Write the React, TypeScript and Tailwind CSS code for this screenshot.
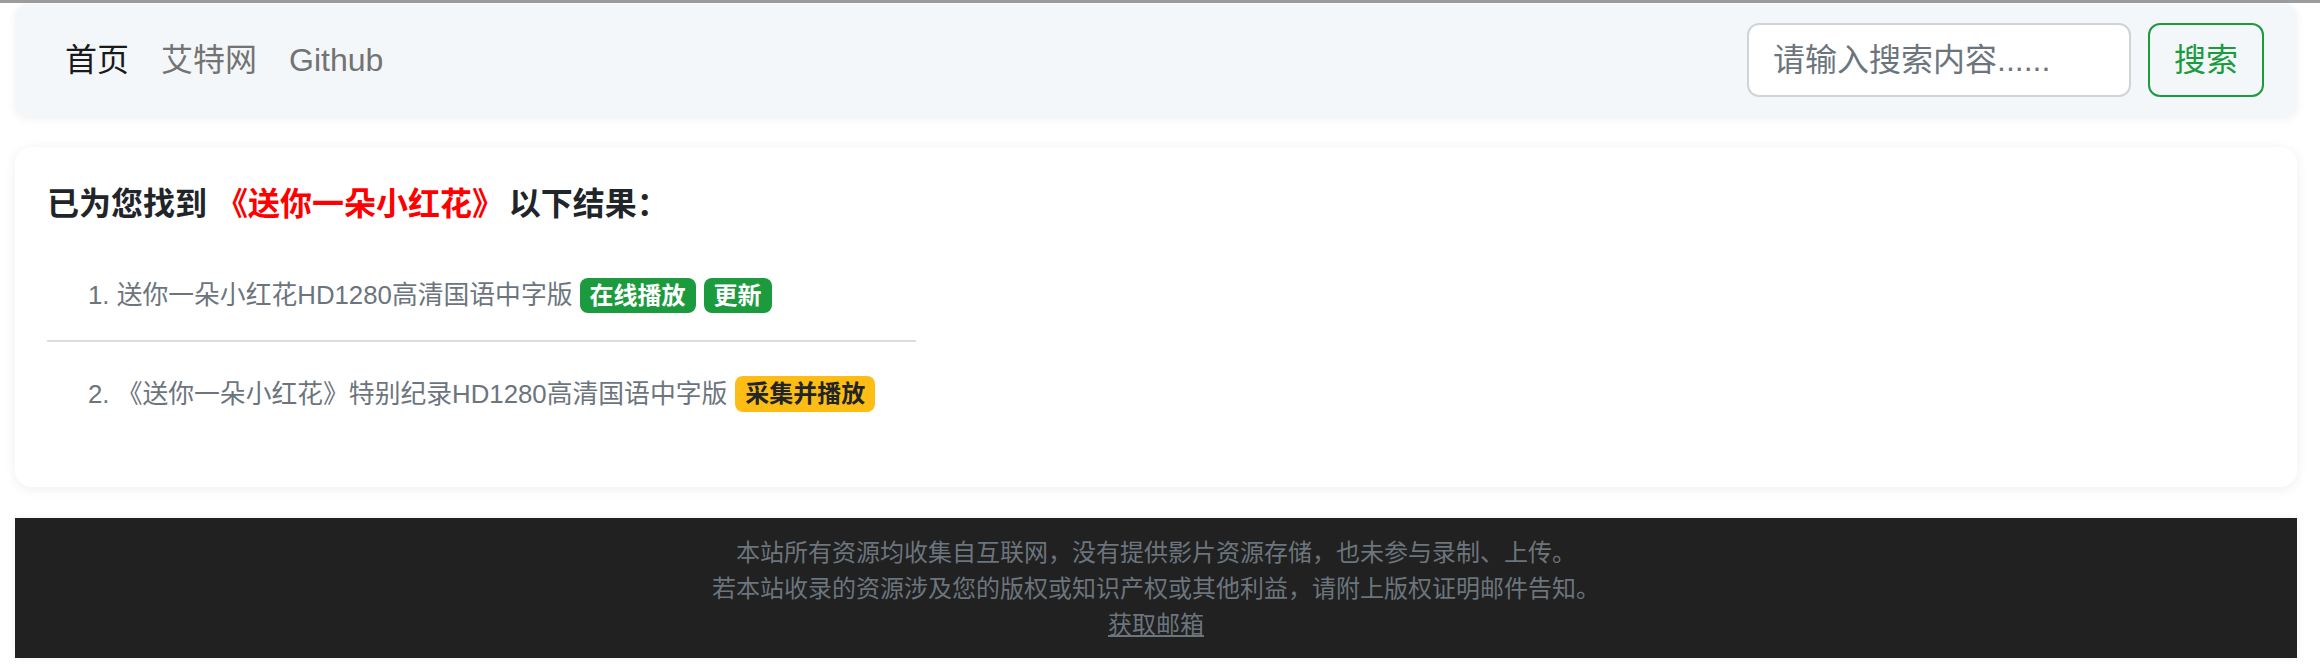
import React from "react";

const font = { fontFamily: '"Liberation Sans", "Noto Sans CJK SC", sans-serif' };

export default function App() {
  return (
    <div className="min-h-[670px] bg-white" style={font}>
      <div className="h-[3px] bg-[#9c9c9c]" />
      <div className="pl-[15px] pr-[23px] pt-px">
        <nav className="flex h-[112px] items-center justify-between rounded-[12px] bg-[#f4f7fa] pl-[34px] pr-[33px] shadow-[0_3px_10px_rgba(0,0,0,0.06)]">
          <div className="flex items-center text-[32px] leading-[48px]">
            <a className="px-4 text-[#1a1a1a]">首页</a>
            <a className="px-4 text-[#737373]">艾特网</a>
            <a className="px-4 text-[#737373]">Github</a>
          </div>
          <div className="flex items-center gap-[17px]">
            <input
              className="h-[74px] w-[384px] rounded-[12px] border-2 border-[#cfd4da] bg-white px-[24px] text-[32px] text-[#212529] outline-none placeholder:text-[#6c757d]"
              placeholder="请输入搜索内容......"
              style={font}
            />
            <button className="h-[74px] w-[116px] rounded-[12px] border-2 border-[#1b9b3e] text-[32px] text-[#1b9b3e]">
              搜索
            </button>
          </div>
        </nav>

        <div className="mt-[31px] rounded-[16px] bg-white pb-[75px] pl-[32px] pt-[38px] shadow-[0_2px_12px_rgba(0,0,0,0.07)]">
          <h5 className="text-[32px] font-bold leading-[38px] text-[#212529]">
            已为您找到 <span className="mr-[-4px] text-[#ff0000]">《送你一朵小红花》</span> 以下结果：
          </h5>
          <div className="mt-[55px] w-[869px]">
            <div className="border-b-2 border-[#dcdcdc] pb-[27px]">
              <div className="flex h-[35px] items-center pl-[41px] text-[25.8px] leading-[35px] text-[#6c757d]">
                <span>1. 送你一朵小红花HD1280高清国语中字版</span>
                <span className="ml-[7px] flex h-[35px] items-center rounded-[8px] bg-[#1b9b3e] px-[10px] text-[24px] font-bold text-white">
                  在线播放
                </span>
                <span className="ml-[8px] flex h-[35px] items-center rounded-[8px] bg-[#1b9b3e] px-[10px] text-[24px] font-bold text-white">
                  更新
                </span>
              </div>
            </div>
            <div className="mt-[34px] flex h-[36px] items-center pl-[41px] text-[25.8px] leading-[36px] text-[#6c757d]">
              <span>2. 《送你一朵小红花》特别纪录HD1280高清国语中字版</span>
              <span className="ml-[8px] flex h-[36px] items-center rounded-[8px] bg-[#fdbd14] px-[10px] text-[24px] font-bold text-[#212529]">
                采集并播放
              </span>
            </div>
          </div>
        </div>

        <footer className="mt-[31px] bg-[#212121] pb-[15px] pt-[17px] text-center text-[24px] leading-[36px] text-[#6c757d] shadow-[0_0_8px_rgba(0,0,0,0.06)]">
          <p>本站所有资源均收集自互联网，没有提供影片资源存储，也未参与录制、上传。</p>
          <p>若本站收录的资源涉及您的版权或知识产权或其他利益，请附上版权证明邮件告知。</p>
          <p>
            <a className="underline">获取邮箱</a>
          </p>
        </footer>
      </div>
    </div>
  );
}
